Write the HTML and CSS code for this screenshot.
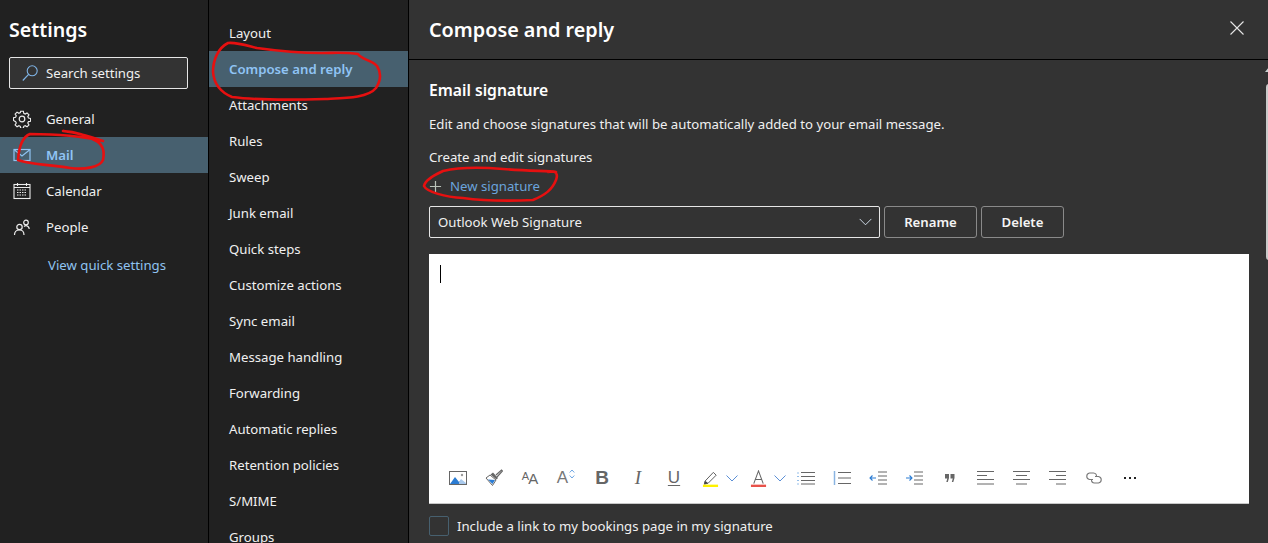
FILE: index.html
```html
<!DOCTYPE html>
<html lang="en">
<head>
<meta charset="utf-8">
<title>Settings</title>
<link rel="stylesheet" href="styles.css">
</head>
<body>
<div class="app">
  <aside class="side">
    <h1 class="side-title">Settings</h1>
    <div class="search">
      <svg class="search-ic" viewBox="0 0 16 16"><circle cx="10.200" cy="5.800" r="5" fill="none" stroke="#7fb4e6" stroke-width="1.100"/><path d="M6.600 9.400 .8 15.500" fill="none" stroke="#7fb4e6" stroke-width="1.200"/></svg>
      <span>Search settings</span>
    </div>
    <nav class="side-nav">
      <div class="side-item">
        <svg class="side-ic" viewBox="0 0 18 18" fill="none" stroke="#ededed" stroke-width="1.200"><circle cx="9" cy="9" r="2.800"/><path d="M7.600 1h2.800l.4 2.200 1.500.7 1.900-1.200 2 2-1.200 1.900.7 1.500 2.200.4v2.900l-2.200.4-.7 1.500 1.200 1.900-2 2-1.900-1.200-1.500.7-.4 2.200H7.600l-.4-2.200-1.500-.7-1.900 1.200-2-2 1.200-1.900-.7-1.500L.1 10.600V7.700l2.200-.4.7-1.500-1.200-1.900 2-2 1.900 1.200 1.500-.7z" transform="translate(.4 .3) scale(.96)"/></svg>
        <span>General</span>
      </div>
      <div class="side-item active">
        <svg class="side-ic" viewBox="0 0 18 18" fill="none" stroke="#8fc3f2" stroke-width="1.200"><rect x="1" y="3.500" width="16" height="11"/><path d="M1.500 4 9 10l7.500-6"/></svg>
        <span>Mail</span>
      </div>
      <div class="side-item">
        <svg class="side-ic" viewBox="0 0 18 18" fill="none" stroke="#ededed" stroke-width="1.100"><rect x="1" y="2.500" width="16" height="14"/><path d="M1 5.500h16M4.500 1v3M13.500 1v3"/><path d="M4 8h10M4 10.500h10M4 13h10" stroke-dasharray="1.500 1"/></svg>
        <span>Calendar</span>
      </div>
      <div class="side-item">
        <svg class="side-ic" viewBox="0 0 18 18" fill="none" stroke="#ededed" stroke-width="1.200"><circle cx="6.500" cy="9" r="2.700"/><circle cx="13" cy="4.500" r="2.300"/><path d="M1.500 17c0-3 2-5 5-5s4.500 2 4.500 5M11 8.500c1-.8 3-.8 4 0 .8.700 1.200 1.700 1.200 2.500"/></svg>
        <span>People</span>
      </div>
    </nav>
    <a class="quick">View quick settings</a>
  </aside>

  <nav class="sub">
    <div class="sub-item">Layout</div>
    <div class="sub-item active">Compose and reply</div>
    <div class="sub-item">Attachments</div>
    <div class="sub-item">Rules</div>
    <div class="sub-item">Sweep</div>
    <div class="sub-item">Junk email</div>
    <div class="sub-item">Quick steps</div>
    <div class="sub-item">Customize actions</div>
    <div class="sub-item">Sync email</div>
    <div class="sub-item">Message handling</div>
    <div class="sub-item">Forwarding</div>
    <div class="sub-item">Automatic replies</div>
    <div class="sub-item">Retention policies</div>
    <div class="sub-item">S/MIME</div>
    <div class="sub-item">Groups</div>
  </nav>

  <main class="main">
    <header class="main-head">
      <h2 class="main-title">Compose and reply</h2>
      <svg class="close" viewBox="0 0 14 14" fill="none" stroke="#e6e6e6" stroke-width="1.100"><path d="M.5.500l13 13M13.500.500l-13 13"/></svg>
    </header>
    <div class="body">
      <div class="content">
        <h3 class="sec-title">Email signature</h3>
        <p class="desc">Edit and choose signatures that will be automatically added to your email message.</p>
        <p class="create">Create and edit signatures</p>
        <div class="new">
          <svg class="plus" viewBox="0 0 14 14" stroke="#b9c2b9" stroke-width="1.300"><path d="M7 1v12M1 7h12"/></svg>
          <span>New signature</span>
        </div>
        <div class="sig-row">
          <div class="select">
            <span>Outlook Web Signature</span>
            <svg class="chev" viewBox="0 0 14 8" fill="none" stroke="#d8e6f2" stroke-width="1"><path d="M.7.700 7 7l6.300-6.300"/></svg>
          </div>
          <button class="btn rename">Rename</button>
          <button class="btn delete">Delete</button>
        </div>
        <div class="editor">
          <div class="area"><span class="caret"></span></div>
          <div class="toolbar">
            <div class="tool"><svg viewBox="0 0 18 14"><rect x=".5" y=".500" width="17" height="13" fill="#fff" stroke="#666"/><path d="M1 13l5-7 4 5 2-2 5 4z" fill="#2b7cd3"/><path d="M10 11l2-3 5 4v1h-7z" fill="#a9c9ec"/><circle cx="13" cy="4" r="1.200" fill="#999"/></svg></div>
            <div class="tool"><svg viewBox="0 0 18 18" fill="none"><path d="M11 6 16.500 1l1 1L12 8" stroke="#666" stroke-width="1.200"/><path d="M8 3.500 13 9l-1.500 1.500-6-5z" fill="#666"/><path d="M5 6 1 9l6.500 7.500L11 11z" fill="#fff" stroke="#666"/><path d="M3 10.500l7 .5-2.500 4z" fill="#2b7cd3"/></svg></div>
            <div class="tool tt-aa"><span class="aa-small">A</span><span class="aa-big">A</span></div>
            <div class="tool tt-size"><span class="size-a">A</span><svg class="size-arrows" viewBox="0 0 6 10" fill="none" stroke="#4a8fdc" stroke-width=".800"><path d="M.7 3.500 3 1l2.300 2.500M.7 6.500 3 9l2.300-2.500"/></svg></div>
            <div class="tool tt-b">B</div>
            <div class="tool tt-i">I</div>
            <div class="tool tt-u">U</div>
            <div class="tool split">
              <div class="tool-main"><svg viewBox="0 0 18 18"><path d="M3 12 12 2.500l3 3L6.500 14l-4 1z" fill="#fff" stroke="#555"/><path d="M2.500 15l1-3.500 3 2.500z" fill="#444"/><rect x="1" y="15.500" width="16" height="2.500" fill="#fff200"/></svg></div>
              <svg class="tool-chev" viewBox="0 0 12 7" fill="none" stroke="#5b8fd6"><path d="M.5.500 6 6 11.500.500"/></svg>
            </div>
            <div class="tool split">
              <div class="tool-main"><svg viewBox="0 0 18 18" fill="none"><path d="M4 14.500 9 1l5 13.500M5.500 10h7" stroke="#666" stroke-width="1.100"/><rect x="1" y="15.500" width="16" height="2.500" fill="#e8524a"/></svg></div>
              <svg class="tool-chev" viewBox="0 0 12 7" fill="none" stroke="#5b8fd6"><path d="M.5.500 6 6 11.500.500"/></svg>
            </div>
            <div class="tool"><svg viewBox="0 0 18 14" fill="none"><path d="M4 1.500h14M4 5.500h14M4 9.500h14M4 13h14" stroke="#666"/><path d="M1 1.500v1M1 5v1M1 9v1M1 12.500v1" stroke="#2b7cd3"/></svg></div>
            <div class="tool"><svg viewBox="0 0 18 14" fill="none"><path d="M5 1.500h13M5 7h13M5 12.500h13" stroke="#666"/><path d="M1.500 0v14" stroke="#8ab4e2" stroke-width="1.500"/></svg></div>
            <div class="tool"><svg viewBox="0 0 18 14" fill="none"><path d="M9 1h9M9 5h9M9 9h9M9 13h9" stroke="#666"/><path d="M7 7H1M3.500 4.500 1 7l2.500 2.500" stroke="#2b7cd3" stroke-width="1.100"/></svg></div>
            <div class="tool"><svg viewBox="0 0 18 14" fill="none"><path d="M9 1h9M9 5h9M9 9h9M9 13h9" stroke="#666"/><path d="M1 7h6M4.500 4.500 7 7 4.500 9.500" stroke="#2b7cd3" stroke-width="1.100"/></svg></div>
            <div class="tool tool-quote"><svg viewBox="0 0 10 8" fill="#666"><path d="M0 0h4v4L2.800 8H1.300l1-3.500H0zM5.500 0h4v4L8.300 8H6.800l1-3.500h-2.300z"/></svg></div>
            <div class="tool"><svg viewBox="0 0 18 14" fill="none" stroke="#666"><path d="M0 .500h17M0 4.500h10M0 8.500h17M0 13h17"/></svg></div>
            <div class="tool"><svg viewBox="0 0 18 14" fill="none" stroke="#666"><path d="M0 .500h17M3 4.500h11M0 8.500h17M3 13h11"/></svg></div>
            <div class="tool"><svg viewBox="0 0 18 14" fill="none" stroke="#666"><path d="M0 .500h17M7 4.500h10M0 8.500h17M7 13h10"/></svg></div>
            <div class="tool"><svg viewBox="0 0 18 12" fill="none" stroke="#777" stroke-width="1.100"><path d="M8 7.500H4.500a3.300 3.300 0 0 1 0-6.500h4a3.300 3.300 0 0 1 3 3.500"/><path d="M10 4.500h3.500a3.300 3.300 0 0 1 0 6.500h-4a3.300 3.300 0 0 1-3-3.500"/></svg></div>
            <div class="tool tool-more"><i></i><i></i><i></i></div>
          </div>
        </div>
        <label class="check">
          <span class="box"></span>
          <span>Include a link to my bookings page in my signature</span>
        </label>
      </div>
      <div class="scroll">
        <svg class="scroll-up" viewBox="0 0 8 5"><path d="M0 5 4 0l4 5z" fill="#c8d0d0"/></svg>
        <div class="thumb"></div>
      </div>
    </div>
  </main>
</div>

<svg class="ink" viewBox="0 0 1268 543" fill="none" stroke="#e61010" stroke-width="2.600" stroke-linecap="round" stroke-linejoin="round">
  <path d="M358 54C345 52 335 53 322 53 298 53 278 51 257 48 245 45 236 42 228 43 218 48 213 60 213 72 214 84 220 92 232 97 255 100 290 100 325 99 345 98 368 98 376 88 381 80 381 72 377 66 372 60 362 60 358 54Z"/>
  <path d="M103 141C92 137 78 133 63 131 78 132 88 136 96 141M103 141C90 138 70 134 30 134 22 137 19 146 18 160 28 164 42 164 70 168 85 170 100 167 103 160 105 150 103 144 92 138"/>
  <path d="M556 172C550 171 530 171 503 169 480 167 460 167 443 171 432 176 425 181 424 186 427 192 445 197 463 198 485 201 510 201 533 200 545 195 552 190 556 180 558 175 557 170 548 172"/>
</svg>
</body>
</html>
```

FILE: styles.css
```css
* { box-sizing: border-box; }
html, body { margin: 0; height: 100%; overflow: hidden; }
body { font-family: "Noto Sans", "Open Sans", sans-serif; font-size: 13.200px; color: #f0f0f0; background: #333; }
h1, h2, h3, p { margin: 0; }

.app { display: flex; width: 1268px; height: 543px; position: relative; overflow: hidden; }

.side { width: 209px; flex: none; background: #212121; border-right: 1px solid #000; padding-top: 15px; }
.side-title { margin-left: 9px; font-size: 19.600px; line-height: 30px; font-weight: 600; color: #fff; }
.search { margin: 12px 20px 0 9px; height: 32px; width: 179px; display: flex; align-items: center; gap: 8px; padding-left: 12px; background: #333; border: 1px solid #e6e6e6; border-radius: 2px; }
.search-ic { width: 16px; height: 16px; flex: none; }
.side-nav { margin-top: 12px; }
.side-item { height: 36px; display: flex; align-items: center; padding-left: 13px; gap: 15px; }
.side-ic { width: 18px; height: 18px; flex: none; }
.side-item.active { background: #47606f; color: #90c4f5; font-weight: 600; }
.quick { display: block; margin: 11px 0 0 48px; line-height: 18px; color: #8fc3f0; }

.sub { width: 200px; flex: none; background: #212121; border-right: 1px solid #000; padding-top: 15px; }
.sub-item { height: 36px; line-height: 36px; padding-left: 20px; }
.sub-item.active { background: #47606f; color: #90c4f5; font-weight: 600; }

.main { flex: 1; min-width: 0; display: flex; flex-direction: column; background: #333; }
.main-head { height: 60px; flex: none; display: flex; align-items: center; justify-content: space-between; padding: 0 24px 0 20px; border-bottom: 1px solid #000; }
.main-title { font-size: 19.800px; font-weight: 600; color: #fff; }
.close { width: 14px; height: 14px; margin-bottom: 3px; }

.body { flex: 1; display: flex; min-height: 0; }
.content { width: 840px; flex: none; padding: 19px 0 0 20px; }
.sec-title { font-size: 15.700px; line-height: 22px; font-weight: 600; color: #fff; }
.desc { margin-top: 11px; line-height: 24px; }
.create { margin-top: 9px; line-height: 24px; }
.new { margin-top: 5px; height: 24px; display: flex; align-items: center; gap: 8px; color: #6ba4dd; }
.plus { width: 13px; height: 13px; flex: none; }
.sig-row { display: flex; margin-top: 8px; gap: 4px; }
.select { width: 451px; height: 32px; display: flex; align-items: center; justify-content: space-between; padding: 0 7px 0 8px; border: 1px solid #e6e6e6; border-radius: 2px; }
.chev { width: 13px; height: 8px; }
.btn { height: 32px; padding: 0; font: 600 13.200px "Noto Sans", "Open Sans", sans-serif; color: #f4f4f4; background: transparent; border: 1px solid #8a8a8a; border-radius: 3px; }
.rename { width: 93px; }
.delete { width: 83px; }

.editor { margin-top: 16px; width: 820px; height: 250px; background: #fff; border-bottom: 1px solid #c8c8c8; display: flex; flex-direction: column; }
.area { flex: 1; padding: 11px 0 0 11px; }
.caret { display: block; width: 1px; height: 18px; background: #000; }
.toolbar { height: 36px; margin-bottom: 7px; padding-left: 11px; display: flex; align-items: center; color: #666; }
.tool { width: 36px; height: 36px; flex: none; display: flex; align-items: center; justify-content: center; }
.tool > svg { width: 18px; height: 18px; }
.split { width: 48px; justify-content: flex-start; }
.tool-main { width: 36px; display: flex; justify-content: center; }
.tool-main svg { width: 17px; height: 17px; }
.tool .tool-chev { width: 12px; height: 7px; margin-left: -2px; }
.tool-quote > svg { width: 10px; height: 8px; }
.tt-b { font: 700 19px "Liberation Sans", sans-serif; }
.tt-i { font: italic 400 19px "Liberation Serif", serif; }
.tt-u { font: 400 17px "Liberation Sans", sans-serif; text-decoration: underline; text-underline-offset: 2px; }
.aa-small { font: 400 11px "Liberation Sans", sans-serif; margin-bottom: 5px; }
.aa-big { font: 400 15px "Liberation Sans", sans-serif; margin-left: -1px; }
.size-a { font: 400 17px "Liberation Sans", sans-serif; color: #777; }
.tool .size-arrows { width: 6px; height: 10px; margin: 0 0 9px 1px; }
.tool-more { gap: 3px; }
.tool-more i { width: 2px; height: 2px; background: #222; display: block; }

.check { margin-top: 12px; display: flex; align-items: center; gap: 8px; height: 20px; }
.box { width: 20px; height: 20px; flex: none; border: 1px solid #47606f; border-radius: 2px; }

.scroll { flex: 1; position: relative; display: flex; flex-direction: column; align-items: center; padding: 7px 0 0 16px; }
.scroll-up { width: 8px; height: 5px; }
.thumb { width: 6px; height: 176px; margin-top: 12px; background: #cacaca; border-radius: 3px; }

.ink { position: absolute; left: 0; top: 0; width: 1268px; height: 543px; pointer-events: none; }
```
